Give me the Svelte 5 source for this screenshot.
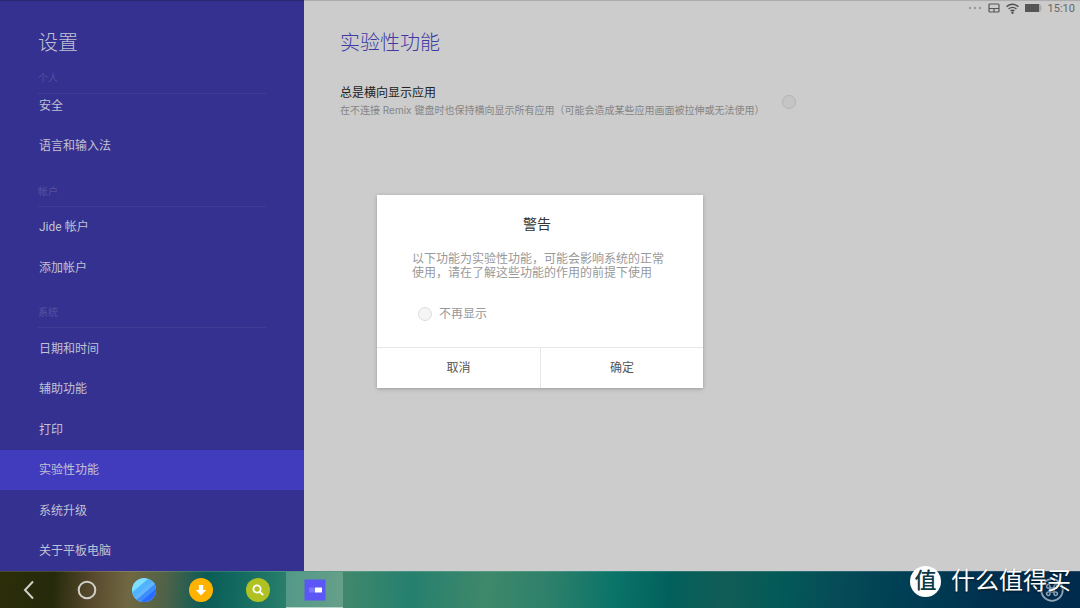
<script>
  let current = $state('实验性功能');
  let landscape = $state(false);
  let hideNext = $state(false);
  let open = $state(true);

  const groups = [
    { title: '', items: ['安全', '语言和输入法'] },
    { title: '帐户', items: ['Jide 帐户', '添加帐户'] },
    { title: '系统', items: ['日期和时间', '辅助功能', '打印', '实验性功能', '系统升级', '关于平板电脑'] }
  ];
</script>

<div class="screen">
  <div class="window">
    <aside class="sidebar">
      <h1>设置</h1>
      <h2 class="group-title">个人</h2>
      <nav>
        {#each groups as group}
          {#if group.title}
            <h2 class="group-title">{group.title}</h2>
          {/if}
          {#each group.items as item}
            <button class="nav-item" class:active={item === current} onclick={() => current = item}>{item}</button>
          {/each}
        {/each}
      </nav>
    </aside>

    <main>
      <div class="status">
        <svg class="dots" width="14" height="10" viewBox="0 0 14 10">
          <circle cx="2" cy="5" r="1.2" /><circle cx="7" cy="5" r="1.2" /><circle cx="12" cy="5" r="1.2" />
        </svg>
        <svg width="12" height="10" viewBox="0 0 12 10">
          <rect x="1" y="1" width="10" height="8" rx="1" fill="none" stroke="#555" stroke-width="1.2" />
          <path d="M1 5.5H11M6 5.5V9" stroke="#555" stroke-width="1.2" />
        </svg>
        <svg width="13" height="11" viewBox="0 0 13 11" fill="none" stroke="#505050" stroke-width="1.4">
          <path d="M.6 3.6Q6.500-1 12.400 3.600M2.600 5.900Q6.500 2.800 10.400 5.900M4.500 8Q6.500 6.400 8.500 8" />
          <circle cx="6.500" cy="9.700" r=".5" fill="#505050" />
        </svg>
        <svg width="17" height="10" viewBox="0 0 17 10">
          <rect x="0" y="1" width="14" height="8" fill="#555" />
          <path d="M14 1h1.500v2h1v4h-1v2H14z" fill="#aaa" />
        </svg>
        <span>15:10</span>
      </div>
      <h2 class="page-title">实验性功能</h2>
      <label class="setting">
        <span class="setting-text">
          <span class="setting-name">总是横向显示应用</span>
          <span class="setting-desc">在不连接 Remix 键盘时也保持横向显示所有应用（可能会造成某些应用画面被拉伸或无法使用）</span>
        </span>
        <input type="checkbox" class="round" bind:checked={landscape} />
      </label>
    </main>
  </div>

  <div class="taskbar">
    <button class="task" aria-label="返回">
      <svg width="24" height="24" viewBox="0 0 24 24" fill="none" stroke="#d0d0c8" stroke-width="2"><path d="M16 3.500L8 12l8 8.500" /></svg>
    </button>
    <button class="task" aria-label="主页">
      <svg width="24" height="24" viewBox="0 0 24 24" fill="none" stroke="#d0d0c8" stroke-width="2"><circle cx="12" cy="12" r="8.300" /></svg>
    </button>
    <button class="task" aria-label="浏览器">
      <svg width="24" height="24" viewBox="0 0 24 24">
        <clipPath id="globe"><circle cx="12" cy="12" r="12" /></clipPath>
        <g clip-path="url(#globe)">
          <path fill="#7fdfff" d="M0 0h24v24H0z" />
          <path fill="#4fb4ff" d="M0 14.500L17 0H24V24H0z" />
          <path fill="#62b6fb" d="M0 21L24 1V24H0z" />
          <path fill="#3a8dfb" d="M2 24L24 5V24z" />
          <path fill="#2b6bff" d="M9 24L24 11V24z" />
        </g>
      </svg>
    </button>
    <button class="task" aria-label="下载">
      <svg width="24" height="24" viewBox="0 0 24 24">
        <circle cx="12" cy="12" r="12" fill="#ffb300" />
        <path fill="#fff" d="M9.800 7h4.400v5h3L12 17.500 6.800 12h3z" />
      </svg>
    </button>
    <button class="task" aria-label="搜索">
      <svg width="24" height="24" viewBox="0 0 24 24">
        <circle cx="12" cy="12" r="12" fill="#afc221" />
        <g fill="none" stroke="#fff" stroke-width="1.800"><circle cx="11" cy="11" r="3.600" /><path d="M13.500 13.500l3.700 3.700" /></g>
      </svg>
    </button>
    <button class="task running" aria-label="设置">
      <svg width="24" height="24" viewBox="0 0 24 24">
        <path fill="#5b56f5" d="M1.500 1.500h21v21h-21z" />
        <path fill="#7b78f8" d="M6 9.500h7v5H6z" />
        <rect x="12" y="9.500" width="7" height="5" rx=".5" fill="#fff" />
      </svg>
    </button>
    <button class="task command" aria-label="快捷键">
      <svg width="24" height="24" viewBox="0 0 24 24" fill="none" stroke="#8fa3b4" stroke-width="1.800">
        <circle cx="12" cy="12" r="10.800" />
        <path stroke-width="1.500" d="M10 10h4v4h-4zM10 10H8.500a1.700 1.700 0 1 1 1.500-1.700zM14 10V8.300A1.700 1.700 0 1 1 15.500 10zM14 14h1.500a1.700 1.700 0 1 1-1.500 1.700zM10 14v1.700A1.700 1.700 0 1 1 8.500 14z" />
      </svg>
    </button>
  </div>

  {#if open}
    <div class="scrim">
      <div class="dialog" role="dialog" aria-labelledby="warn-title">
        <div class="dialog-body">
          <h3 id="warn-title">警告</h3>
          <p>以下功能为实验性功能，可能会影响系统的正常使用，请在了解这些功能的作用的前提下使用</p>
          <label class="dismiss">
            <input type="checkbox" class="round light" bind:checked={hideNext} />
            不再显示
          </label>
        </div>
        <div class="dialog-actions">
          <button onclick={() => open = false}>取消</button>
          <button onclick={() => open = false}>确定</button>
        </div>
      </div>
    </div>
  {/if}

  <div class="watermark">
    <span class="seal">值</span>
    <span>什么值得买</span>
  </div>
</div>

<style>
  :global(body) {
    margin: 0;
  }
  .screen {
    position: relative;
    display: flex;
    flex-direction: column;
    min-height: 100vh;
    font-family: Roboto, "Noto Sans CJK SC", sans-serif;
    font-size: 12px;
    color: #444;
  }
  h1, h2, h3, p {
    margin: 0;
    font-weight: 400;
  }
  button {
    border: 0;
    padding: 0;
    background: none;
    font: inherit;
    color: inherit;
    cursor: pointer;
  }
  svg {
    display: block;
  }

  .window {
    flex: 1;
    display: flex;
    background: #ccc;
  }
  .sidebar {
    flex: 0 0 304px;
    display: flex;
    flex-direction: column;
    background: #343190;
    color: #c2c1d4;
    box-shadow: inset 0 2px 1px -1px #28266f;
  }
  h1 {
    padding: 28px 38px 0;
    font-size: 20px;
    font-weight: 300;
    line-height: 30px;
  }
  .group-title {
    display: flex;
    align-items: flex-end;
    margin: 0 38px;
    padding-bottom: 7px;
    border-bottom: 1px solid #3f3c96;
    font-size: 10px;
    line-height: 14px;
    color: #55529f;
  }
  h1 + .group-title {
    padding-top: 14px;
  }
  /* the first row is scrolled slightly under the group heading */
  nav {
    flex: 1;
    display: grid;
    grid-auto-rows: 1fr;
    margin-top: -9px;
  }
  .nav-item {
    padding: 0 39px 2px;
    text-align: left;
  }
  .nav-item.active {
    background: #413cbe;
  }

  main {
    flex: 1;
    min-width: 0;
    background: #ccc;
    box-shadow: inset 0 2px 1px -1px #aaa;
  }
  .status {
    display: flex;
    align-items: center;
    justify-content: flex-end;
    gap: 6px;
    height: 16px;
    padding-right: 5px;
    font-size: 11px;
    color: #666;
  }
  .dots {
    fill: #999;
  }
  .page-title {
    padding: 12px 36px 0;
    font-size: 20px;
    font-weight: 300;
    line-height: 30px;
    color: #3e3aa5;
  }
  .setting {
    display: flex;
    align-items: center;
    gap: 18px;
    padding: 27px 36px 0;
  }
  .setting-text {
    display: flex;
    flex-direction: column;
  }
  .setting-name {
    line-height: 17px;
    color: #222;
  }
  .setting-desc {
    font-family: Inter, "Noto Sans CJK SC", sans-serif;
    font-size: 10px;
    line-height: 16px;
    color: #858585;
  }
  .round {
    appearance: none;
    box-sizing: border-box;
    width: 14px;
    height: 14px;
    margin: 0;
    border: 1px solid #b3b3b3;
    border-radius: 50%;
    background: #c5c5c5;
  }
  .round.light {
    border-color: #ddd;
    background: #f5f5f5;
  }
  .round:checked {
    background: #5b56f5;
  }

  .taskbar {
    display: flex;
    height: 37px;
    box-sizing: border-box;
    border-top: 1px solid rgba(255, 255, 255, 0.15);
    background: linear-gradient(95deg, #2c2e08 0%, #262a0c 5%, #57482c 8.500%, #706842 12%, #4e6248 15.500%, #0b5c56 19%, #12695f 22%, #2b816c 27%, #40886c 32%, #25806e 38%, #3f886b 45%, #2c806a 51%, #0a7369 57%, #02605c 62%, #125c56 67%, #035a58 72%, #064a56 78%, #004055 83%, #00304e 92%, #002a4c 100%);
  }
  .task {
    display: flex;
    align-items: center;
    justify-content: center;
    width: 57px;
  }
  .task:first-child {
    width: 58px;
  }
  .running {
    background: rgba(255, 255, 255, 0.2);
    border-bottom: 1px solid #b8d4c8;
  }
  .command {
    margin-left: auto;
  }

  .scrim {
    position: absolute;
    inset: 0;
    display: flex;
    align-items: center;
    justify-content: center;
    padding-bottom: 25px;
  }
  .dialog {
    width: 326px;
    background: #fff;
    box-shadow: 0 1px 4px rgba(0, 0, 0, 0.25);
  }
  .dialog-body {
    padding: 19px 35px 24px;
  }
  h3 {
    padding-right: 6px;
    font-size: 14px;
    line-height: 20px;
    text-align: center;
    color: #333;
  }
  p {
    margin-top: 18px;
    line-height: 14px;
    color: #999;
  }
  .dismiss {
    display: flex;
    align-items: center;
    gap: 7px;
    margin-top: 25px;
    padding-left: 6px;
    line-height: 18px;
    color: #999;
  }
  .dialog-actions {
    display: grid;
    grid-template-columns: 1fr 1fr;
    border-top: 1px solid #e6e6e6;
  }
  .dialog-actions button {
    height: 40px;
    padding-bottom: 3px;
    color: #555;
  }
  .dialog-actions button + button {
    border-left: 1px solid #e6e6e6;
  }

  .watermark {
    position: absolute;
    right: 9px;
    bottom: 9px;
    display: flex;
    align-items: center;
    gap: 10px;
    font-size: 24px;
    line-height: 36px;
    color: #fff;
    pointer-events: none;
    text-shadow: 0 1px 2px rgba(0, 0, 0, 0.6);
  }
  .seal {
    width: 31px;
    height: 31px;
    border-radius: 50%;
    background: #fff;
    font-size: 22px;
    font-weight: 500;
    line-height: 30px;
    text-align: center;
    color: #0b3948;
    text-shadow: none;
  }
</style>
